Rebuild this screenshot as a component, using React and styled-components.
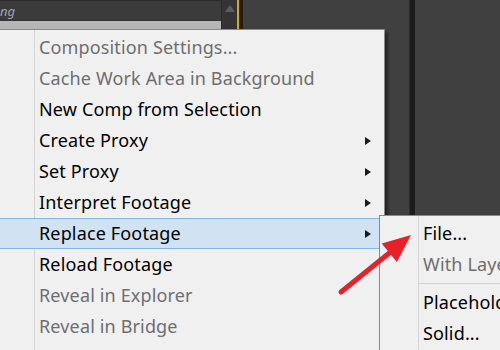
import React from "react";
import styled, { createGlobalStyle } from "styled-components";

const Global = createGlobalStyle`
  html, body { margin: 0; padding: 0; }
  body {
    width: 500px; height: 350px; overflow: hidden;
    background: #404040;
    font-family: "Noto Sans", "Liberation Sans", sans-serif;
  }
`;

const Stage = styled.div`
  position: relative;
  width: 500px;
  height: 350px;
  display: flex;
  background: #404040;
  overflow: hidden;
`;

const ProjectPanel = styled.div`
  width: 221px;
  display: flex;
  flex-direction: column;
  background: #3b3b3b;
  border-top: 1px solid #2b2b2b;
  border-right: 1px solid #2a2a2a;
`;

const HeaderRow = styled.div`
  height: 19px;
  display: flex;
  align-items: center;
  color: #9ea4ae;
  font-style: italic;
  font-size: 13px;
  border-bottom: 1px solid #333;
`;

const SelectedRow = styled.div`
  height: 10px;
  background: #b6b6b6;
`;

const ScrollCol = styled.div`
  width: 15px;
  background: #343434;
  display: flex;
  justify-content: center;
  padding-top: 5px;
  box-sizing: border-box;
`;

const UpArrow = styled.div`
  width: 0; height: 0;
  border-left: 5px solid transparent;
  border-right: 5px solid transparent;
  border-bottom: 7px solid #5c5c5c;
`;

const OrangeLine = styled.div`
  width: 2px;
  background: #e9a300;
`;

const Divider = styled.div`
  width: ${p => p.$w}px;
  background: #1c1c1c;
  border-left: ${p => (p.$edge ? "1px solid #2c2c2c" : "none")};
`;

const Pane = styled.div`
  width: ${p => (p.$w ? p.$w + "px" : "auto")};
  flex: ${p => (p.$w ? "none" : 1)};
  background: #404040;
`;

const Menu = styled.div`
  position: absolute;
  left: ${p => p.$left}px;
  top: ${p => p.$top}px;
  width: ${p => p.$width}px;
  height: 400px;
  box-sizing: border-box;
  background: #f0f0f0;
  border: 1px solid #8a8a8a;
  box-shadow: 3px 3px 3px rgba(0, 0, 0, 0.45);
  padding-top: 2px;
  display: flex;
  flex-direction: column;
`;

const Gutter = styled.div`
  position: absolute;
  left: ${p => p.$x}px;
  top: 0;
  bottom: 0;
  width: 1px;
  background: #d4d4d4;
`;

const Item = styled.div`
  position: relative;
  height: 31px;
  box-sizing: border-box;
  display: flex;
  align-items: center;
  padding-left: ${p => p.$pad}px;
  padding-bottom: 1px;
  font-size: 18px;
  letter-spacing: 0.15px;
  color: ${p => (p.$disabled ? "#6e6e6e" : "#000")};
  background: ${p => (p.$active ? "#d1e3f3" : "transparent")};
  border-top: 1px solid ${p => (p.$active ? "#84b4e8" : "transparent")};
  border-bottom: 1px solid ${p => (p.$active ? "#84b4e8" : "transparent")};
  white-space: nowrap;
`;

const Arrow = styled.span`
  position: absolute;
  right: 13px;
  top: 50%;
  margin-top: -4px;
  width: 0; height: 0;
  border-top: 4px solid transparent;
  border-bottom: 4px solid transparent;
  border-left: 6px solid #1a1a1a;
`;

const Sep = styled.div`
  height: 7px;
  display: flex;
  align-items: center;
  padding-left: ${p => p.$pad}px;
  &::after {
    content: "";
    flex: 1;
    height: 1px;
    background: #d4d4d4;
  }
`;

const Pointer = styled.svg`
  position: absolute;
  left: 0;
  top: 0;
  pointer-events: none;
`;

const mainItems = [
  { t: "Composition Settings...", d: true },
  { t: "Cache Work Area in Background", d: true },
  { t: "New Comp from Selection" },
  { t: "Create Proxy", sub: true },
  { t: "Set Proxy", sub: true },
  { t: "Interpret Footage", sub: true },
  { t: "Replace Footage", sub: true, a: true },
  { t: "Reload Footage" },
  { t: "Reveal in Explorer", d: true },
  { t: "Reveal in Bridge", d: true },
];

export default function App() {
  return (
    <>
      <Global />
      <Stage>
        <ProjectPanel>
          <HeaderRow>ng</HeaderRow>
          <SelectedRow />
        </ProjectPanel>
        <ScrollCol>
          <UpArrow />
        </ScrollCol>
        <OrangeLine />
        <Divider $w={4} />
        <Pane $w={166} />
        <Divider $w={5} $edge />
        <Pane />

        <Menu $left={-2} $top={29} $width={387}>
          <Gutter $x={35} />
          {mainItems.map(it => (
            <Item key={it.t} $pad={40} $disabled={it.d} $active={it.a}>
              {it.t}
              {it.sub && <Arrow />}
            </Item>
          ))}
        </Menu>

        <Menu $left={379} $top={215} $width={200}>
          <Gutter $x={38} />
          <Item $pad={43}>File...</Item>
          <Item $pad={43} $disabled>With Layered Comp</Item>
          <Sep $pad={39} />
          <Item $pad={43}>Placeholder...</Item>
          <Item $pad={43}>Solid...</Item>
        </Menu>

        <Pointer width="500" height="350" viewBox="0 0 500 350">
          <line x1="341" y1="292" x2="393" y2="250" stroke="#e8202a" strokeWidth="5" strokeLinecap="round" />
          <polygon points="411,235 381.7,243.4 396.9,262" fill="#e8202a" />
        </Pointer>
      </Stage>
    </>
  );
}
